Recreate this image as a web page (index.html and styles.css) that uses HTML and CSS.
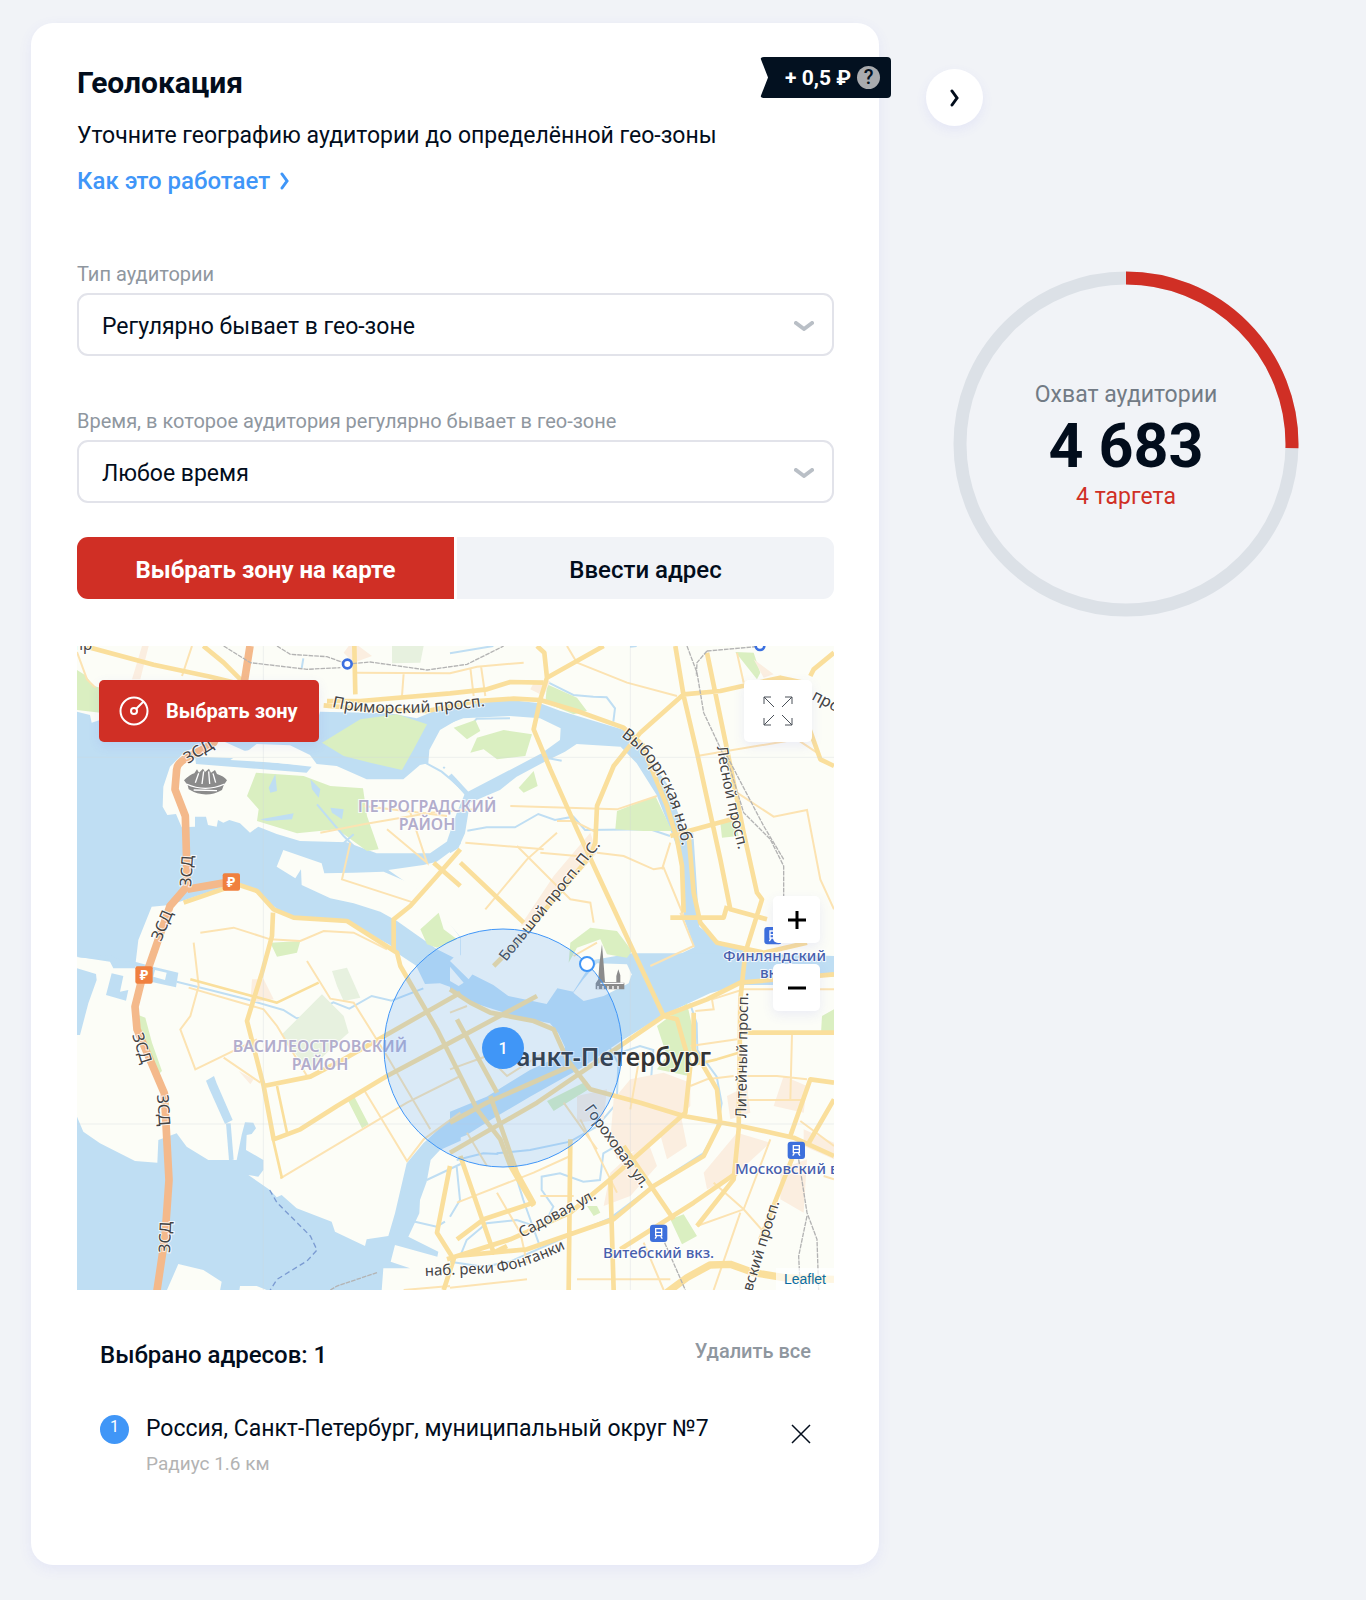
FILE: index.html
```html
<!DOCTYPE html>
<html lang="ru">

<head>
    <meta charset="utf-8">
    <meta name="viewport" content="width=device-width, initial-scale=1">
    <title>Геолокация</title>
    <link rel="stylesheet" href="styles.css">
</head>

<body>
    <div class="page">
        <main class="card">
            <div class="price">
                <span>+ 0,5 ₽</span>
                <button class="help" type="button" aria-label="Подсказка">?</button>
            </div>

            <h1>Геолокация</h1>
            <p class="lead">Уточните географию аудитории до определённой гео-зоны</p>
            <a class="how" href="#">Как это работает
                <svg width="10" height="18" viewBox="0 0 10 18"><path d="M2 2l5 7-5 7" /></svg>
            </a>

            <div class="field">
                <label for="type">Тип аудитории</label>
                <div class="select">
                    <select id="type">
                        <option>Регулярно бывает в гео-зоне</option>
                    </select>
                    <svg width="20" height="10" viewBox="0 0 20 10"><path d="M2 2l8 6 8-6" /></svg>
                </div>
            </div>
            <div class="field">
                <label for="time">Время, в которое аудитория регулярно бывает в гео-зоне</label>
                <div class="select">
                    <select id="time">
                        <option>Любое время</option>
                    </select>
                    <svg width="20" height="10" viewBox="0 0 20 10"><path d="M2 2l8 6 8-6" /></svg>
                </div>
            </div>

            <div class="tabs">
                <button class="tab active" type="button">Выбрать зону на карте</button>
                <button class="tab" type="button">Ввести адрес</button>
            </div>

            <div class="map">
                <svg class="canvas" viewBox="0 0 757 644" preserveAspectRatio="xMidYMid slice">
                    <g transform="scale(.33333)">
                        <!-- water -->
                        <g class="water">
                            <g transform="translate(-21 -18)">
                                <path d="M21 215L60 225 65 248 90 240 430 300 345 335 300 380 280 440 278 500 292 525 318 522 335 562 375 560 375 530 408 530 414 555 440 560 444 540 460 548 478 540 510 550 540 578 565 560 620 582 690 603 830 607 920 640 1080 640 1130 605 1172 555V612L1100 665 1060 675 955 690 1020 735 1060 760 1110 820 1172 892V1050L1050 985 990 945 960 915 840 850 650 830 600 790 560 750 480 735 300 795 245 800 205 900 195 985 130 985 120 965 21 950Z" />
                                <path d="M430 290L530 335 560 312 660 316 720 345 740 372 800 378 890 418 1000 418 1050 375 1075 370 1078 330 1110 270 1175 232V180L1040 235 960 220 750 215 740 250 400 250ZM375 350L500 355 725 380 710 398 378 372Z" />
                                <path class="stream" d="M1060 365L1115 395 1145 420 1172 445M1172 340L1120 385M695 85L700 55" />
                            </g>
                            <g transform="translate(1119 -18)">
                                <path d="M0 218L80 190 180 180 270 190 330 212 530 272 580 330 650 430 700 560 730 580 738 700 748 860 800 900 850 920 900 940 1152 948V1010L560 1000 600 985 733 922 700 830 705 780 695 660 665 580 620 465 560 370 512 320 380 312 345 335 290 362 200 410 150 450 60 488 45 580 25 625 0 640 -8 600 20 520 45 460 160 400 275 340 330 300 332 265 270 235 180 228 40 235 0 250Z" />
                                <path class="stream wide" d="M50 460L0 405" />
                                <path class="stream" d="M0 382L50 310 108 270M52 572L110 562 195 562 265 522 315 540 370 530 405 570 600 568 660 588M290 125L370 165 430 170 470 172 495 205 490 245M280 352L335 362M180 235L80 236 0 330M560 18L540 20M0 40L130 18" />
                            </g>
                            <g transform="translate(-21 942)">
                                <path d="M21 -8L195 5 250 20 325 38 318 82 245 66 200 50 198 20 120 -15ZM21 25L78 42 80 60 55 130 30 225 21 225ZM125 40L160 48 150 95 175 90 168 122 108 105Z" />
                                <path d="M21 470L40 515 90 550 195 603 262 608 265 540 320 520 350 560 415 600 500 600 515 525 525 487 550 488 558 505 545 522 530 525 528 570 580 600 580 630 565 650 535 645 600 690 620 712 635 705 680 745 785 785 795 815 885 858 890 838 955 828 975 760 1010 610 1060 550 1172 448V542L1110 570 1082 600 1070 665 1050 720 1048 760 1015 830 1105 875 1102 890 975 855 962 905 1020 925 1100 925 940 925 935 992 595 992 560 978 510 978 508 992H450L455 965 400 930 325 912 290 992H21Z" />
                                <path d="M408 362L432 348 440 370 488 480 465 492 417 385Z" />
                                <path class="stream wide" d="M475 490L484 600" />
                                <path class="stream" d="M320 65L420 90 530 118 640 150 680 175 715 170 790 127 838 146 905 108 965 122 1060 85M1070 660L1172 612M1035 785L1100 800 1125 785" />
                                <path d="M1030 0L1172 -60V92L1110 70 1065 72Z" />
                            </g>
                            <g transform="translate(1119 942)">
                                <path d="M0 -45L60 40 130 75 175 108 290 132 322 85 370 95 430 0 545 -20 800 -20 1152 -10V42L1000 75 870 75 780 100 640 165 510 245 400 320 240 410 130 475 50 525 0 545V455L110 410 240 330 330 288 345 262 325 220 300 190 200 170 60 125 0 90Z" />
                                <path class="stream" d="M720 130L740 190 742 270 800 350 815 430 800 510 760 580 620 670 480 775 360 825 180 905 100 920 0 905M470 245L505 310 500 430 440 500 360 545 240 570 140 580M520 275L570 258 610 270 600 400 580 510 460 580 450 660 400 665 330 640 275 650 275 690 310 740 290 780M180 590L220 720 270 860M20 620L30 720 0 770M30 890L50 840 110 790 200 780 260 800M20 600L100 580 145 582" />
                            </g>
                        </g>

                        <!-- islands on top of the water -->
                        <g class="land">
                            <path d="M599 662L619 612 734 652 742 682 830 680 920 677 990 707 1040 740 1090 795 1150 875V945L1080 910 960 825 910 797 830 772 760 757 674 717 672 670 655 697Z" />
                            <path d="M1489 1040L1519 1000 1560 952 1650 955 1664 985 1655 1012 1580 1050 1520 1065Z" />
                            <path d="M1060 350L1120 270 1150 258 1185 250 1300 248 1360 255 1430 268 1300 330 1164 420 1100 360Z" />
                            <path d="M570 305L640 312 700 345 690 358 560 348 460 342 500 315Z" />
                            <path d="M234 972L269 980 264 1002 229 992Z" />
                            <path d="M1119 945L1145 920 1190 980 1175 1000ZM1119 962L1160 1010 1145 1020 1119 1005Z" />
                        </g>

                        <!-- parks and blocks -->
                        <g class="park">
                            <path d="M0 72L25 88 50 120 70 125V200L0 192ZM537 380L680 390 760 420 858 427 870 510 905 610 870 615 780 550 660 562 540 525 545 490 510 450ZM735 290L850 220 960 205 1050 235 1010 310 975 372 880 350 800 330ZM580 890L670 885 660 920 600 932Z" />
                            <path d="M1130 245L1195 222 1210 255 1170 280ZM1200 275L1280 252 1365 265 1345 330 1260 340 1220 310 1180 320ZM1325 425L1370 375 1382 420 1340 440ZM1620 495L1735 450 1785 555 1700 555 1615 550ZM1930 530L1970 510 1985 570 1935 575ZM1975 18L2030 20 2050 80 2040 100ZM1410 115L1500 155 1530 195 1490 205 1405 170ZM1480 890L1540 845 1620 855 1665 915 1650 935 1590 925 1570 880 1500 905 1475 950ZM1030 850L1085 800 1100 850 1140 880 1080 905 1050 895Z" />
                            <path d="M186 1108L205 1115 225 1190 255 1275 245 1285 215 1220 190 1160ZM812 1362L832 1352 875 1435 855 1447ZM1740 1140L1830 1072 1850 1160 1835 1290 1740 1270 1770 1230ZM1410 1365L1530 1305 1535 1330 1430 1395ZM1780 1720L1820 1705 1860 1770 1815 1795ZM2235 1110L2271 1090V1162H2232ZM1530 1680L1560 1680 1570 1700 1550 1710Z" />
                        </g>
                        <path class="park pale" d="M945 0H1040L1030 50 945 52ZM615 1165L735 1045 770 1080 800 1110 815 1160 770 1200 700 1270 660 1230ZM765 975L810 965 850 1055 800 1065 780 1020Z" />
                        <g class="block">
                            <path d="M195 0H215L190 100H165ZM815 0H845L885 30 830 50 800 20ZM1370 110L1420 105 1400 150 1360 130ZM1430 690L1540 560 1560 620 1420 780 1370 830 1330 840ZM2030 40L2090 85 2060 95ZM525 1000L560 1000 590 1060 520 1070ZM485 1275L530 1300 520 1315Z" />
                            <path d="M1610 1360L1660 1300 1760 1280 1840 1310 1840 1380 1780 1440 1700 1500 1620 1540 1600 1480ZM1740 1430L1810 1400 1830 1500 1770 1540ZM1600 1580L1710 1480 1740 1560 1660 1650 1580 1680ZM1880 1580L1980 1460 2080 1490 1960 1600 1890 1630ZM1950 1350L2010 1320 2020 1400 1960 1420ZM2120 1290L2190 1320 2180 1400 2090 1380ZM2110 1570L2190 1540 2180 1700 2110 1660ZM2180 1450L2271 1490V1540L2180 1500ZM1500 1350L1590 1330 1580 1420 1500 1430Z" />
                        </g>
                        <path class="pond" d="M575 425L595 385 600 435 580 440ZM700 400L730 430 725 455 705 430ZM550 520L650 502 645 520 570 525ZM760 485L800 490 795 520 765 500Z" />
                        <path class="stream" d="M720 475L800 570 830 600M830 565L790 600" />

                        <!-- small streets -->
                        <g class="street">
                            <path d="M0 18L30 100 55 125M345 0L315 90M830 80L1119 82 1200 62 1340 50M980 82L975 150M1180 65L1190 150M1212 60L1225 150M820 590L795 700 1010 770M730 560L860 535 1060 500 1190 490M1000 500L1050 650 930 550" />
                            <path d="M860 480L1110 510M1165 590L1400 610M1390 620L1500 630M1560 890L1490 930" />
                            <path d="M1500 50L1650 110 1800 150M1470 0L1500 50M1300 480L1620 490 1740 450M1440 525L1490 525 1560 560M1225 790L1350 640 1440 560M1320 600L1480 760 1540 770 1550 830M1560 620L1640 630 1730 670 1760 665 1820 810M1755 670L1780 590M1860 330L2160 280 2220 320M1980 440L2090 512 2190 492 2230 700 2271 790M1980 20L2000 110M1810 800L1850 900 1720 960" />
                            <path d="M350 890L365 1020 340 1110 310 1150 355 1270 540 1180M370 860L470 845 580 880 670 885 740 855 830 860 930 910M335 1025L560 1090 600 1140 690 1290M690 945L760 1058 830 1070 930 1230 1060 1450M440 1235L550 1310M610 1597L990 1370 1150 1290M860 1330L990 1545 1040 1480 1150 1400M1119 1100L1170 1080M1460 1370L1560 1510M1510 1420L1620 1640M1170 1460L1230 1560M1119 1270L1230 1230 1290 1290 1400 1220" />
                            <path d="M1840 1200L1980 1180M1855 1095L1910 1090 1905 1060 2000 1030H2271M1840 1320L1890 1300 1970 1290M1980 1362H2180M2145 1165L2140 1360M1980 1290H2100L2190 1300M2170 1425L2271 1500M1500 1900H1780M1140 1670L1370 1580 1480 1530M1260 1640L1330 1760 1350 1850M1390 1650L1490 1650M1700 1790L1760 1932M1860 1740L2000 1690 2080 1480M1910 1610L2000 1690 2080 1780M1990 1700L1910 1932M1119 1925L1350 1900M980 1932L1119 1920M1660 1390L1690 1220M2271 1600L2240 1590" />
                        </g>

                        <!-- main roads -->
                        <g class="road">
                            <path d="M29 2L230 56 400 92 505 118M379 0L440 50 500 110" />
                            <path d="M832 0L835 145M750 165L850 165 1119 142 1230 130 1300 108 1400 110M740 178L870 190 1050 195 1200 165 1310 158 1390 162 1500 195 1640 245 1700 300" />
                            <path d="M1380 0L1402 20 1410 95 1390 160 1370 250 1420 370 1500 550 1560 680 1690 960 1760 1110M1410 95L1580 0M1690 260L1610 360 1560 480 1555 590 1540 630 1330 880 1250 960M1690 260L1820 145 1930 135 2020 115 2110 95 2180 110M1795 0L1820 150 1860 320 1930 640 1960 790 2070 820M1890 20L1950 310 2000 560 2040 740 2055 760 2005 920 1990 1060 1985 1450 1970 1600 1860 1740M1700 310L1770 480 1800 580 1815 660 1820 800M1835 570L1850 740 1870 830 1920 890 2060 920 2190 890M1780 570L1980 515M1780 815H1940L1950 780M2180 200L2230 340 2271 360M2200 90L2210 70 2271 20" />
                            <path d="M320 770L480 715 540 735 590 790 650 815 810 825 960 920 970 960 1080 1150 1200 1390 1270 1480 1300 1560 1370 1680M588 800L585 870 555 980 510 1125 560 1320 590 1480 670 1450 780 1380 930 1290 1119 1190 1380 1050M560 1320L700 1292 800 1240 1150 1040M1150 610L1080 690 1000 780 950 820 950 910M1150 650L1340 830M1070 650L1150 720" />
                            <path d="M1119 1030L1180 1070 1240 1100 1370 1125 1430 1150 1470 1240 1540 1330 1690 1370 1820 1410 1990 1440 2150 1475 2271 1530M1119 1430L1230 1370 1480 1260M1119 1520L1380 1370 1600 1220 1760 1110 1890 1060 1990 1010 2271 985M1760 1110L1800 1120 1840 1260 1825 1400 1600 1600 1480 1700 1300 1780 1110 1840M1240 1350L1320 1580 1370 1670 1220 1720 1140 1780M1480 1480L1475 1932M1600 1600L1610 1932M1630 1810L1850 1670 1980 1580M1640 1500L1790 1720M1140 1830L1350 1810 1610 1720 1730 1620 1880 1530 1930 1430 1920 1330 1850 1210 1850 1100M2140 1470L2200 1300 2271 1310M2190 1500L2271 1360M2160 1500L2050 1780M1150 1530L1250 1820 1290 1800M1119 1560L1080 1760 1130 1840 1100 1932M1140 1120L1260 1340M2000 1160H2271" />
                        </g>
                        <path class="road broad" d="M1769 1940L1830 1895 1899 1857 1960 1855 2030 1880 2120 1895 2271 1900" />
                        <path class="road thin" d="M1835 1260L1920 1240 1985 1220M340 1000L600 1070 725 1010M588 1480L615 1597M600 1320L630 1460" />

                        <!-- highway -->
                        <path class="highway" d="M519 0L500 120 410 290C350 330 300 340 299 370L294 430 325 510 331 720 279 780 214 967 194 1002 174 1082 180 1150 262 1342 276 1602 264 1772 239 1940M331 730L455 708" />

                        <!-- railways and ferry -->
                        <path class="rail" d="M440 0L520 50 690 70 790 65M600 0L640 25 750 32 811 54 880 48 1050 72 1170 55 1280 0M1830 0L1860 80 1880 200 1960 370 2000 500 2080 580 2120 660 2120 750M1890 15L1860 50 1858 90M1950 330L2060 540 2120 640M1890 15L2060 0M1763 1790L1825 1932M2165 1540L2190 1700 2220 1780 2225 1932M2190 1710L2165 1830 2170 1932M760 1932L780 1920 900 1880" />
                        <path class="ferry" d="M578 1632L600 1670 700 1770 720 1812 690 1845 600 1900 575 1940" />
                        <path class="tile" d="M0 334H2271M0 1434H2271M559 0V1932M1660 0V1932" />

                        <!-- stadium -->
                        <g class="sight">
                            <path d="M321 403Q340 385 352 382L360 370 366 380 378 368 384 378 396 368 402 380 414 372 420 384Q440 390 450 403L440 418 435 432Q385 460 335 430L332 418Z" />
                            <path class="ribs" d="M328 414Q385 440 443 414M355 410L365 382M375 414L380 376M398 414L395 376M416 410L408 382M350 432L420 434" />
                        </g>
                        <!-- fortress -->
                        <path class="sight" d="M1575 895L1567 955 1564 1000 1556 1012V1030H1642V1010H1630V988L1624 970 1618 990V1008H1584L1580 955Z" />
                        <path class="windows" d="M1563 1020V1030M1578 1020V1030M1593 1020V1030M1608 1020V1030M1623 1020V1030M1570 1012H1640" />

                        <circle class="stop" cx="811" cy="54" r="13" />
                        <circle class="stop" cx="2049" cy="-1" r="13" />

                        <g class="toll">
                            <rect x="437" y="682" width="52" height="52" rx="6" />
                            <rect x="175" y="961" width="52" height="52" rx="6" />
                        </g>
                        <g class="station" transform="translate(2062 843)">
                            <rect width="52" height="52" rx="9" />
                            <path d="M17 12H35V33H17ZM17 23H35M20 35L15 42M32 35L37 42" />
                        </g>
                        <g class="station" transform="translate(2132 1487)">
                            <rect width="52" height="52" rx="9" />
                            <path d="M17 12H35V33H17ZM17 23H35M20 35L15 42M32 35L37 42" />
                        </g>
                        <g class="station" transform="translate(1719 1736)">
                            <rect width="52" height="52" rx="9" />
                            <path d="M17 12H35V33H17ZM17 23H35M20 35L15 42M32 35L37 42" />
                        </g>
                    </g>

                    <!-- labels -->
                    <defs>
                        <path id="l-prim" d="M255 61Q310 74 408 60" />
                        <path id="l-vyb" d="M544 90Q592 124 606 205" />
                        <path id="l-les" d="M640 101Q646 146 667 225" />
                        <path id="l-font" d="M348 630L416 627Q445 624 490 602" />
                    </defs>
                    <g class="names">
                        <text><textPath href="#l-prim">Приморский просп.</textPath></text>
                        <text><textPath href="#l-vyb">Выборгская наб.</textPath></text>
                        <text class="small"><textPath href="#l-les">Лесной просп.</textPath></text>
                        <text class="small"><textPath href="#l-font">наб. реки Фонтанки</textPath></text>
                        <text class="small" transform="translate(429 316) rotate(-51)">Большой просп. П.С.</text>
                        <text transform="translate(734 53) rotate(28)">просп.</text>
                        <text class="small" transform="translate(669 472) rotate(-89)">Литейный просп.</text>
                        <text class="small" transform="translate(507 463) rotate(54)">Гороховая ул.</text>
                        <text class="small" transform="translate(445 592) rotate(-28)">Садовая ул.</text>
                        <text class="small" transform="translate(675 646) rotate(-73)">вский просп.</text>
                        <text transform="translate(111 118) rotate(-32)">ЗСД</text>
                        <text transform="translate(114 241) rotate(-86)">ЗСД</text>
                        <text transform="translate(84 296) rotate(-67)">ЗСД</text>
                        <text transform="translate(55 389) rotate(72)">ЗСД</text>
                        <text transform="translate(80 449) rotate(86)">ЗСД</text>
                        <text transform="translate(93 607) rotate(-88)">ЗСД</text>
                        <text class="small" x="-3" y="4">пр</text>
                    </g>
                    <g class="district">
                        <text x="350" y="166">ПЕТРОГРАДСКИЙ</text>
                        <text x="350" y="184">РАЙОН</text>
                        <text x="243" y="406">ВАСИЛЕОСТРОВСКИЙ</text>
                        <text x="243" y="424">РАЙОН</text>
                    </g>
                    <g class="station-name">
                        <text x="646" y="315">Финляндский</text>
                        <text x="683" y="332">вкз.</text>
                        <text x="526" y="612">Витебский вкз.</text>
                        <text x="658" y="528">Московский вкз.</text>
                    </g>
                    <g class="rub">
                        <text x="154" y="241">₽</text>
                        <text x="67" y="334">₽</text>
                    </g>
                    <text class="city" x="634" y="420">Санкт-Петербург</text>

                    <!-- selected zone -->
                    <circle class="zone" cx="426" cy="402" r="119" />
                    <circle class="handle" cx="510" cy="318" r="7" />
                    <circle class="pin" cx="426" cy="402" r="21" />
                    <text class="pin-text" x="426" y="408">1</text>
                </svg>

                <button class="pick" type="button">
                    <svg width="30" height="30" viewBox="0 0 30 30">
                        <circle cx="15" cy="15" r="13.5" />
                        <circle cx="15" cy="15" r="3" />
                        <path d="M17 13L24.500 5.500" />
                    </svg>
                    Выбрать зону
                </button>
                <button class="tool full" type="button" aria-label="Во весь экран">
                    <svg width="30" height="30" viewBox="0 0 30 30"><path d="M1 8V1H8M1 1L11 11M22 1H29V8M29 1L19 11M1 22V29H8M1 29L11 19M22 29H29V22M29 29L19 19" /></svg>
                </button>
                <div class="zoom">
                    <button class="tool" type="button" aria-label="Приблизить">
                        <svg width="18" height="18" viewBox="0 0 18 18"><path d="M0 9H18M9 0V18" /></svg>
                    </button>
                    <button class="tool" type="button" aria-label="Отдалить">
                        <svg width="18" height="18" viewBox="0 0 18 18"><path d="M0 9H18" /></svg>
                    </button>
                </div>
                <a class="leaflet" href="#">Leaflet</a>
            </div>

            <section class="chosen">
                <div class="chosen-head">
                    <h2>Выбрано адресов: 1</h2>
                    <button class="clear" type="button">Удалить все</button>
                </div>
                <div class="address">
                    <span class="num">1</span>
                    <div class="info">
                        <p>Россия, Санкт-Петербург, муниципальный округ №7</p>
                        <p class="radius">Радиус 1.6 км</p>
                    </div>
                    <button class="remove" type="button" aria-label="Удалить">
                        <svg width="20" height="20" viewBox="0 0 20 20"><path d="M1 1L19 19M19 1L1 19" /></svg>
                    </button>
                </div>
            </section>
        </main>

        <aside class="side">
            <button class="next" type="button" aria-label="Свернуть">
                <svg width="10" height="18" viewBox="0 0 10 18"><path d="M2 2l5 7-5 7" /></svg>
            </button>
            <div class="reach">
                <svg viewBox="0 0 346 346">
                    <circle class="ring" cx="173" cy="173" r="166" />
                    <circle class="part" cx="173" cy="173" r="166" pathLength="1000" stroke-dasharray="254 746" transform="rotate(-90 173 173)" />
                </svg>
                <div class="reach-text">
                    <span class="reach-label">Охват аудитории</span>
                    <strong>4 683</strong>
                    <span class="targets">4 таргета</span>
                </div>
            </div>
        </aside>
    </div>
</body>

</html>
```

FILE: styles.css
```css
* {
    box-sizing: border-box;
}

body {
    margin: 0;
    background-color: #f1f3f7;
    color: #020d1c;
    font-family: Roboto, "Liberation Sans", sans-serif;
    font-size: 23px;
    line-height: 32px;
}

h1,
h2,
p {
    margin: 0;
}

button {
    font-family: inherit;
    color: inherit;
    border: 0;
    padding: 0;
    cursor: pointer;
}

svg {
    display: block;
    fill: none;
}

.page {
    display: grid;
    grid-template-columns: minmax(0, 1fr) 400px;
    gap: 47px;
    padding: 23px 40px 35px 31px;
}

.card {
    position: relative;
    padding: 42px 45px 89px 46px;
    background-color: #fff;
    border-radius: 22px;
    box-shadow: 0 4px 14px rgba(90, 90, 240, 0.08);
}

.price {
    position: absolute;
    top: 34px;
    right: -12px;
    display: flex;
    align-items: center;
    gap: 6px;
    height: 41px;
    padding: 0 11px 0 25px;
    background-color: #031120;
    color: #fff;
    font-size: 21px;
    font-weight: 700;
    border-radius: 4px;
    clip-path: polygon(0 0, 100% 0, 100% 100%, 0 100%, 8px 50%);
}

.help {
    width: 23px;
    height: 23px;
    border-radius: 50%;
    background-color: #a9abae;
    color: #031120;
    font-size: 20px;
    font-weight: 500;
    line-height: 23px;
}

h1 {
    font-size: 30px;
    line-height: 36px;
    font-weight: 700;
}

.lead {
    margin-top: 19px;
}

.how {
    display: inline-flex;
    align-items: center;
    gap: 10px;
    margin: 13px 0 65px;
    color: #3f96f8;
    font-size: 24px;
    font-weight: 500;
    text-decoration: none;
}

.how svg {
    stroke: #3f96f8;
    stroke-width: 3;
    stroke-linecap: round;
}

.field {
    margin-bottom: 53px;
}

.field+.field {
    margin-bottom: 34px;
}

.field label {
    display: block;
    margin-bottom: 7px;
    color: #8f979f;
    font-size: 20px;
    line-height: 24px;
}

.select {
    position: relative;
}

.select select {
    display: block;
    width: 100%;
    height: 63px;
    padding: 3px 60px 0 23px;
    appearance: none;
    background-color: #fff;
    border: 2px solid #e2e3ea;
    border-radius: 11px;
    color: inherit;
    font-family: inherit;
    font-size: 23px;
}

.select svg {
    position: absolute;
    right: 20px;
    top: 28px;
    stroke: #b9bfc6;
    stroke-width: 4;
    stroke-linecap: round;
    stroke-linejoin: round;
    pointer-events: none;
}

.tabs {
    display: grid;
    grid-template-columns: 1fr 1fr;
    gap: 3px;
    margin-bottom: 47px;
}

.tab {
    height: 62px;
    padding-top: 3px;
    background-color: #f1f3f7;
    font-size: 24px;
    font-weight: 500;
    border-radius: 0 11px 11px 0;
}

.tab.active {
    background-color: #d02f25;
    color: #fff;
    font-weight: 700;
    border-radius: 11px 0 0 11px;
}

/* map */
.map {
    position: relative;
    height: 644px;
    overflow: hidden;
    background-color: #fcfdf7;
}

.canvas {
    width: 100%;
    height: 100%;
}

.water,
.pond {
    fill: #bfdef3;
}

.stream {
    fill: none;
    stroke: #bfdef3;
    stroke-width: 6;
}

.stream.wide {
    stroke-width: 14;
}

.land {
    fill: #fcfdf7;
}

.park {
    fill: #daefc1;
}

.park.pale {
    fill: #e7f1df;
}

.block {
    fill: #fbeee0;
}

.street {
    stroke: #fce3b2;
    stroke-width: 6;
}

.road {
    stroke: #fadf9c;
    stroke-width: 14;
    stroke-linejoin: round;
}

.road.thin {
    stroke-width: 8;
}

.road.broad {
    stroke-width: 22;
}

.highway {
    stroke: #f4b98b;
    stroke-width: 23;
    stroke-linejoin: round;
}

.rail {
    stroke: #b3b3b3;
    stroke-width: 4;
    stroke-dasharray: 14 3;
}

.ferry {
    stroke: #7b9bd2;
    stroke-width: 4;
    stroke-dasharray: 16 10;
}

.tile {
    stroke: #cfd6da;
    stroke-width: 2;
    opacity: 0.5;
}

.sight {
    fill: #8b8b8b;
}

.ribs,
.windows {
    fill: none;
    stroke: #fff;
    stroke-width: 4;
}

.stop {
    fill: #fff;
    stroke: #3b70e0;
    stroke-width: 8;
}

.toll {
    fill: #f0803f;
}

.station {
    fill: #3d70dc;
    stroke: #fff;
    stroke-width: 4;
}

.station rect {
    stroke: none;
}

.station path {
    fill: none;
}

.canvas text {
    font-family: "Noto Sans", "Open Sans", sans-serif;
    font-size: 16px;
    paint-order: stroke;
    stroke: rgba(255, 255, 255, 0.8);
    stroke-width: 2px;
}

.names {
    fill: #444;
}

.canvas .names .small {
    font-size: 15px;
}

.district {
    fill: #b2adcc;
    font-weight: 600;
    text-anchor: middle;
}

.station-name {
    fill: #4760ad;
}

.canvas .station-name text {
    font-size: 15px;
    font-weight: 500;
}

.canvas .rub text {
    fill: #fff;
    stroke: none;
    font-size: 14px;
    font-weight: 700;
    text-anchor: middle;
}

.canvas .city {
    fill: #333;
    font-size: 25px;
    font-weight: 600;
    text-anchor: end;
}

.zone {
    fill: rgba(64, 150, 247, 0.18);
    stroke: #4096f7;
    stroke-width: 1;
}

.handle {
    fill: #fff;
    stroke: #4096f7;
    stroke-width: 2;
}

.pin {
    fill: #4096f7;
}

.canvas .pin-text {
    fill: #fff;
    stroke: none;
    font-family: Roboto, sans-serif;
    font-weight: 500;
    text-anchor: middle;
}

.pick {
    position: absolute;
    top: 34px;
    left: 22px;
    display: flex;
    align-items: center;
    gap: 17px;
    height: 62px;
    padding: 0 21px 0 20px;
    background-color: #d02f25;
    color: #fff;
    font-size: 20px;
    font-weight: 700;
    border-radius: 5px;
    box-shadow: 0 4px 12px rgba(90, 90, 240, 0.1);
}

.pick svg {
    stroke: #fff;
    stroke-width: 2;
}

.tool {
    display: flex;
    align-items: center;
    justify-content: center;
    width: 47px;
    height: 47px;
    background-color: #fff;
    border-radius: 5px;
    box-shadow: 0 4px 12px rgba(90, 90, 240, 0.1);
}

.tool svg {
    stroke: #000;
    stroke-width: 3;
}

.tool.full {
    position: absolute;
    top: 34px;
    right: 22px;
    width: 68px;
    height: 62px;
}

.tool.full svg {
    stroke: #4a5058;
    stroke-width: 1;
}

.zoom {
    position: absolute;
    top: 250px;
    right: 14px;
    display: grid;
    gap: 21px;
}

.leaflet {
    position: absolute;
    right: 0;
    bottom: 0;
    padding: 0 8px;
    background-color: rgba(255, 255, 255, 0.7);
    color: #0b6c9f;
    font-family: "Liberation Sans", Arial, sans-serif;
    font-size: 14px;
    line-height: 22px;
    text-decoration: none;
}

/* chosen addresses */
.chosen {
    padding: 49px 23px 0;
}

.chosen-head {
    display: flex;
    justify-content: space-between;
    align-items: flex-start;
}

h2 {
    font-size: 24px;
    line-height: 32px;
    font-weight: 500;
}

.clear {
    background: none;
    color: #8f979f;
    font-size: 20px;
    line-height: 24px;
    font-weight: 500;
}

.address {
    display: flex;
    align-items: flex-start;
    margin-top: 42px;
}

.num {
    width: 29px;
    height: 29px;
    margin: 2px 17px 0 0;
    border-radius: 50%;
    background-color: #4096f7;
    color: #fff;
    font-size: 16px;
    line-height: 24px;
    text-align: center;
}

.info {
    flex: 1;
}

.radius {
    margin-top: 7px;
    color: #b3b3b3;
    font-size: 19px;
    line-height: 24px;
}

.remove {
    margin-top: 11px;
    background: none;
}

.remove svg {
    stroke: #020d1c;
    stroke-width: 1.5;
}

/* audience reach */
.side {
    padding-top: 46px;
}

.next {
    display: flex;
    align-items: center;
    justify-content: center;
    width: 57px;
    height: 57px;
    border-radius: 50%;
    background-color: #fff;
    box-shadow: 0 4px 12px rgba(90, 90, 240, 0.08);
}

.next svg {
    stroke: #020d1c;
    stroke-width: 3;
    stroke-linecap: round;
}

.reach {
    display: grid;
    width: 346px;
    margin: 145px auto 0;
}

.reach svg,
.reach-text {
    grid-area: 1 / 1;
}

.ring {
    stroke: #dce1e7;
    stroke-width: 13;
}

.part {
    stroke: #d02f25;
    stroke-width: 13;
}

.reach-text {
    display: flex;
    flex-direction: column;
    align-items: center;
    justify-content: center;
    padding-top: 4px;
}

.reach-label {
    color: #727b85;
}

.reach strong {
    font-size: 61px;
    line-height: 70px;
    font-weight: 700;
}

.targets {
    color: #d02f25;
}
```
